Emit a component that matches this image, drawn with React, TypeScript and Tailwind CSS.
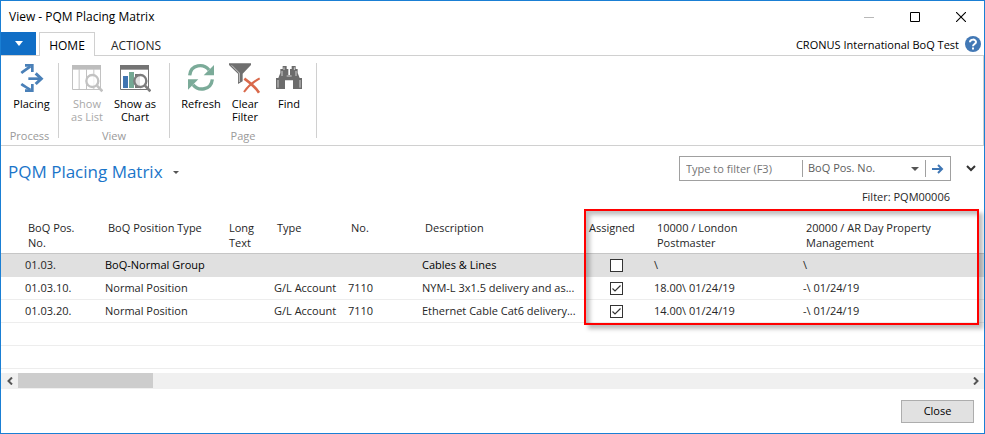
import type { ReactNode } from "react";

function PlacingIcon() {
  return (
    <svg width="26" height="32" viewBox="60 186 78 96" fill="none" stroke="#4a80b8" strokeWidth="8">
      <path d="M67 219C73 214 82 208 94 199" />
      <path d="M67 252C73 257 82 262 94 269" />
      <path d="M88 236H126" />
      <path d="M78 196H100V216" />
      <path d="M78 272H100V252" />
      <path d="M110 220L127 236L110 252" strokeWidth="9" />
    </svg>
  );
}

function Magnifier({ color }: { color: string }) {
  return (
    <>
      <circle cx="283" cy="243" r="18" fill="#fff" fillOpacity="0.8" stroke={color} strokeWidth="7" />
      <path d="M297 257L313 274" stroke={color} strokeWidth="8" />
    </>
  );
}

function ListIcon() {
  return (
    <svg width="32" height="32" viewBox="219 186 96 96" fill="none">
      <path d="M223.500 196V268.500H307.500V196M243.500 208V268M265.500 208V268M287.500 208V268" stroke="#c2c2c2" strokeWidth="3" />
      <path d="M222 195H309V209H222Z" fill="#bdbdbd" />
      <Magnifier color="#c2c2c2" />
    </svg>
  );
}

function ChartIcon() {
  return (
    <svg width="32" height="32" viewBox="219 186 96 96" fill="none">
      <path d="M223.500 196V268.500H307.500V196" stroke="#747474" strokeWidth="3" />
      <path d="M222 195H309V209H222Z" fill="#747474" />
      <path d="M231 228H246V264H231Z" fill="#3f74b0" />
      <path d="M249 216H264V264H249Z" fill="#74a893" />
      <path d="M267 222H282V264H267Z" fill="#747474" />
      <Magnifier color="#7d7d7d" />
    </svg>
  );
}

function RefreshIcon() {
  return (
    <svg width="32" height="32" viewBox="552 186 96 96" fill="none">
      <path d="M566 226C570 192 608 190 624 210" stroke="#7bab99" strokeWidth="10" />
      <path d="M639 195V226H608Z" fill="#7bab99" />
      <path d="M634 238C630 272 592 274 576 254" stroke="#7bab99" strokeWidth="10" />
      <path d="M561 269V238H592Z" fill="#7bab99" />
    </svg>
  );
}

function ClearFilterIcon() {
  return (
    <svg width="32" height="32" viewBox="690 186 96 96" fill="none">
      <path d="M690 190H756V195L731 221V244L717 252V221L690 195Z" fill="#6f6f6f" />
      <path d="M698 196L721 219V246" stroke="#c9c9c9" strokeWidth="3" />
      <path d="M736 236C750 246 768 260 780 278" stroke="#d9694b" strokeWidth="8" />
      <path d="M782 235C762 246 746 260 735 276" stroke="#d9694b" strokeWidth="6" />
    </svg>
  );
}

function FindIcon() {
  return (
    <svg width="32" height="32" viewBox="819 186 96 96" fill="#6c6c6c">
      <path d="M848 198H860V207H865V225H870V207H875V198H887V207H893V219L899 234H906V267H879V241H855V267H828V234H835L841 219V207H848Z" />
      <path d="M852 202V210M883 202V210M846 213V228M888 213V228M834 240V263M900 240V263M860 228H875" stroke="#d0d0d0" strokeWidth="3" />
    </svg>
  );
}

function RibbonButton({ icon, label, disabled, width }: { icon: ReactNode; label: string[]; disabled?: boolean; width: string }) {
  return (
    <button
      type="button"
      disabled={disabled}
      className={`flex flex-col items-center whitespace-nowrap leading-[13px] text-black disabled:text-[#a8a8a8] ${width}`}
    >
      {icon}
      <span className="mt-[3px] block">
        {label.map((line) => (
          <span key={line} className="block">
            {line}
          </span>
        ))}
      </span>
    </button>
  );
}

function RibbonGroup({ title, width, pad, children }: { title: string; width: string; pad: string; children: ReactNode }) {
  return (
    <>
      <section aria-label={title} className={`flex flex-col justify-between pb-[3px] pt-[6px] ${width}`}>
        <div className={`flex items-start justify-center ${pad}`}>{children}</div>
        <div className="text-center leading-[13px] text-[#9a9a9a]">{title}</div>
      </section>
      <div className="my-[7px] w-px bg-[#d0d0d0]" />
    </>
  );
}

const headers = [
  ["BoQ Pos.", "No."],
  ["BoQ Position Type"],
  ["Long", "Text"],
  ["Type"],
  ["No."],
  ["Description"],
  ["Assigned"],
  ["10000 / London", "Postmaster"],
  ["20000 / AR Day Property", "Management"],
];

const rows = [
  { pos: "01.03.", kind: "BoQ-Normal Group", type: "", no: "", text: "Cables & Lines", assigned: false, a: "\\", b: "\\" },
  { pos: "01.03.10.", kind: "Normal Position", type: "G/L Account", no: "7110", text: "NYM-L 3x1.5 delivery and as...", assigned: true, a: "18.00\\ 01/24/19", b: "-\\ 01/24/19" },
  { pos: "01.03.20.", kind: "Normal Position", type: "G/L Account", no: "7110", text: "Ethernet Cable Cat6 delivery...", assigned: true, a: "14.00\\ 01/24/19", b: "-\\ 01/24/19" },
];

function Matrix() {
  return (
    <div className="relative">
      <table className="w-full table-fixed border-separate border-spacing-0 text-[#262626]">
        <colgroup>
          <col className="w-[101px]" />
          <col className="w-[121px]" />
          <col className="w-[48px]" />
          <col className="w-[74px]" />
          <col className="w-[74px]" />
          <col className="w-[164px]" />
          <col className="w-[68px]" />
          <col className="w-[149px]" />
          <col />
        </colgroup>
        <thead>
          <tr className="h-[43px]">
            {headers.map((lines, i) => (
              <th key={i} scope="col" className="whitespace-nowrap border-b border-[#c6c6c6] p-0 pl-[6px] pt-[9px] text-left align-top font-normal leading-[15px] first:pl-[27px]">
                {lines.map((line) => (
                  <span key={line} className="block">
                    {line}
                  </span>
                ))}
              </th>
            ))}
          </tr>
        </thead>
        <tbody>
          {rows.map((r) => (
            <tr
              key={r.pos}
              className="h-[23px] first:bg-[#e0e0e0] first:text-black [&>td]:whitespace-nowrap [&>td]:border-b [&>td]:border-[#ededed] [&>td]:p-0 [&>td]:pl-[3px] [&>td]:leading-[22px] first:[&>td]:border-[#e0e0e0]"
            >
              <td>
                <span className="pl-[21px] text-[#262626]">{r.pos}</span>
              </td>
              <td>{r.kind}</td>
              <td />
              <td>{r.type}</td>
              <td>{r.no}</td>
              <td>{r.text}</td>
              <td>
                <label className="flex h-[22px] items-center justify-center pr-1">
                  <span className="relative block size-[13px]">
                    <input
                      type="checkbox"
                      defaultChecked={r.assigned}
                      aria-label={`Assigned ${r.pos}`}
                      className="peer block size-[13px] appearance-none border border-[#333] bg-white"
                    />
                    <svg className="pointer-events-none absolute inset-0 hidden peer-checked:block" width="13" height="13" viewBox="0 0 13 13" fill="none" stroke="#333" strokeWidth="1.200">
                      <path d="M2.500 6.500L5 9L10.500 3.500" />
                    </svg>
                  </span>
                </label>
              </td>
              <td className="text-[#262626]">{r.a}</td>
              <td className="text-[#262626]">{r.b}</td>
            </tr>
          ))}
          {[0, 1].map((i) => (
            <tr key={i} className="h-[23px]">
              <td colSpan={9} className="border-b border-[#ededed] p-0" />
            </tr>
          ))}
        </tbody>
      </table>
      <div className="pointer-events-none absolute -top-[2px] bottom-[44px] left-[583px] right-[5px] border-2 border-[#ff0000] shadow-[4px_4px_4px_rgba(0,0,0,0.25),inset_4px_4px_4px_rgba(0,0,0,0.25)]" />
    </div>
  );
}

export default function App() {
  return (
    <main className="flex flex-col border border-[#1a7fd4] bg-white font-['Open_Sans','Noto_Sans',sans-serif] text-[11px] text-black">
      <header className="flex h-[31px] items-center justify-between pl-2 pr-[18px]">
        <h1 className="text-[12px]">View - PQM Placing Matrix</h1>
        <div className="flex items-center gap-9">
          <button type="button" aria-label="Minimize">
            <svg width="10" height="10" viewBox="0 0 10 10" stroke="#b8b8b8"><path d="M0 5.500H10" /></svg>
          </button>
          <button type="button" aria-label="Maximize">
            <svg width="10" height="10" viewBox="0 0 10 10" fill="none" stroke="#000"><path d="M0.500 0.500H9.500V9.500H0.500Z" /></svg>
          </button>
          <button type="button" aria-label="Close window">
            <svg width="10" height="10" viewBox="0 0 10 10" stroke="#000" strokeWidth="1.100"><path d="M0 0L10 10M10 0L0 10" /></svg>
          </button>
        </div>
      </header>

      <nav className="flex h-6 border-b border-[#d0d0d0]">
        <button type="button" aria-label="Application menu" className="flex w-[35px] items-center justify-center bg-[#106ec6]">
          <svg width="8" height="5" viewBox="0 0 8 5" fill="#fff"><path d="M0 0H8L4 5Z" /></svg>
        </button>
        <button type="button" className="relative -mb-px ml-[3px] w-14 border border-b-0 border-[#d0d0d0] bg-white pt-[3px] text-[12px]">HOME</button>
        <button type="button" className="ml-4 pt-1 text-[12px] text-[#262626]">ACTIONS</button>
        <div className="ml-auto flex items-center gap-[6px] pr-[3px]">
          <span className="pt-1">CRONUS International BoQ Test</span>
          <button type="button" aria-label="Help">
            <svg width="16" height="16" viewBox="0 0 16 16">
              <circle cx="8" cy="8" r="8" fill="#4278b5" />
              <path d="M5 6.200C5 2.800 11 2.800 11 6C11 8 8 8 8 10.200" fill="none" stroke="#fff" strokeWidth="2" />
              <path d="M7 11.500H9V13.500H7Z" fill="#fff" />
            </svg>
          </button>
        </div>
      </nav>

      <div className="flex h-[90px] border-b border-r border-[#d0d0d0]">
        <RibbonGroup title="Process" width="w-[57px]" pad="pl-1">
          <RibbonButton icon={<PlacingIcon />} label={["Placing"]} width="w-12" />
        </RibbonGroup>
        <RibbonGroup title="View" width="w-[110px]" pad="pr-[6px]">
          <RibbonButton icon={<ListIcon />} label={["Show", "as List"]} width="w-12" disabled />
          <RibbonButton icon={<ChartIcon />} label={["Show as", "Chart"]} width="w-12" />
        </RibbonGroup>
        <RibbonGroup title="Page" width="w-[146px]" pad="pl-1">
          <RibbonButton icon={<RefreshIcon />} label={["Refresh"]} width="w-11" />
          <RibbonButton icon={<ClearFilterIcon />} label={["Clear", "Filter"]} width="w-11" />
          <RibbonButton icon={<FindIcon />} label={["Find"]} width="w-11" />
        </RibbonGroup>
      </div>

      <div className="mt-[10px] flex items-start justify-between pl-[7px] pr-2">
        <button type="button" className="flex h-8 items-center gap-[10px] text-[17px] text-[#1a75c9]">
          <h2>PQM Placing Matrix</h2>
          <svg width="6" height="3" viewBox="0 0 6 3" fill="#555"><path d="M0 0H6L3 3Z" /></svg>
        </button>
        <div className="flex items-center gap-[15px]">
          <form className="flex h-[25px] w-[272px] items-center border border-[#a0a0a0] text-[#5c5c5c]">
            <input type="text" aria-label="Type to filter" placeholder="Type to filter (F3)" className="h-full w-[122px] pb-px pl-[6px] outline-none placeholder:text-[#757575]" />
            <div className="relative flex h-[17px] flex-1 items-center border-x border-[#a0a0a0]">
              <select aria-label="Filter column" className="w-full appearance-none bg-white pl-[5px] outline-none">
                <option>BoQ Pos. No.</option>
              </select>
              <svg className="pointer-events-none absolute right-[6px]" width="8" height="4" viewBox="0 0 8 4" fill="#555"><path d="M0 0H8L4 4Z" /></svg>
            </div>
            <button type="button" aria-label="Apply filter" className="flex w-[24px] justify-center">
              <svg width="12" height="10" viewBox="0 0 12 10" fill="none" stroke="#3f76b4" strokeWidth="2"><path d="M0 5H10M6 1L10 5L6 9" /></svg>
            </button>
          </form>
          <button type="button" aria-label="Expand filter">
            <svg width="10" height="7" viewBox="0 0 10 7" fill="none" stroke="#333" strokeWidth="2"><path d="M1 1L5 5L9 1" /></svg>
          </button>
        </div>
      </div>
      <p className="pr-[34px] pt-px text-right leading-4 text-[#262626]">Filter: PQM00006</p>

      <div className="mt-[6px]">
        <Matrix />
      </div>

      <div className="mt-1 flex h-4 items-center bg-[#f0f0f0]">
        <button type="button" aria-label="Scroll left" className="flex w-[17px] justify-center">
          <svg width="6" height="8" viewBox="0 0 6 8" fill="none" stroke="#555" strokeWidth="2"><path d="M5 0.500L1.500 4L5 7.500" /></svg>
        </button>
        <div className="flex h-full flex-1 items-start">
          <div className="h-[15px] w-[135px] bg-[#cdcdcd]" />
        </div>
        <button type="button" aria-label="Scroll right" className="flex w-[17px] justify-center">
          <svg width="6" height="8" viewBox="0 0 6 8" fill="none" stroke="#555" strokeWidth="2"><path d="M1 0.500L4.500 4L1 7.500" /></svg>
        </button>
      </div>

      <footer className="flex justify-end pb-[10px] pr-[10px] pt-[11px]">
        <button type="button" className="h-[23px] w-[73px] border border-[#adadad] bg-[#e1e1e1]">Close</button>
      </footer>
    </main>
  );
}
